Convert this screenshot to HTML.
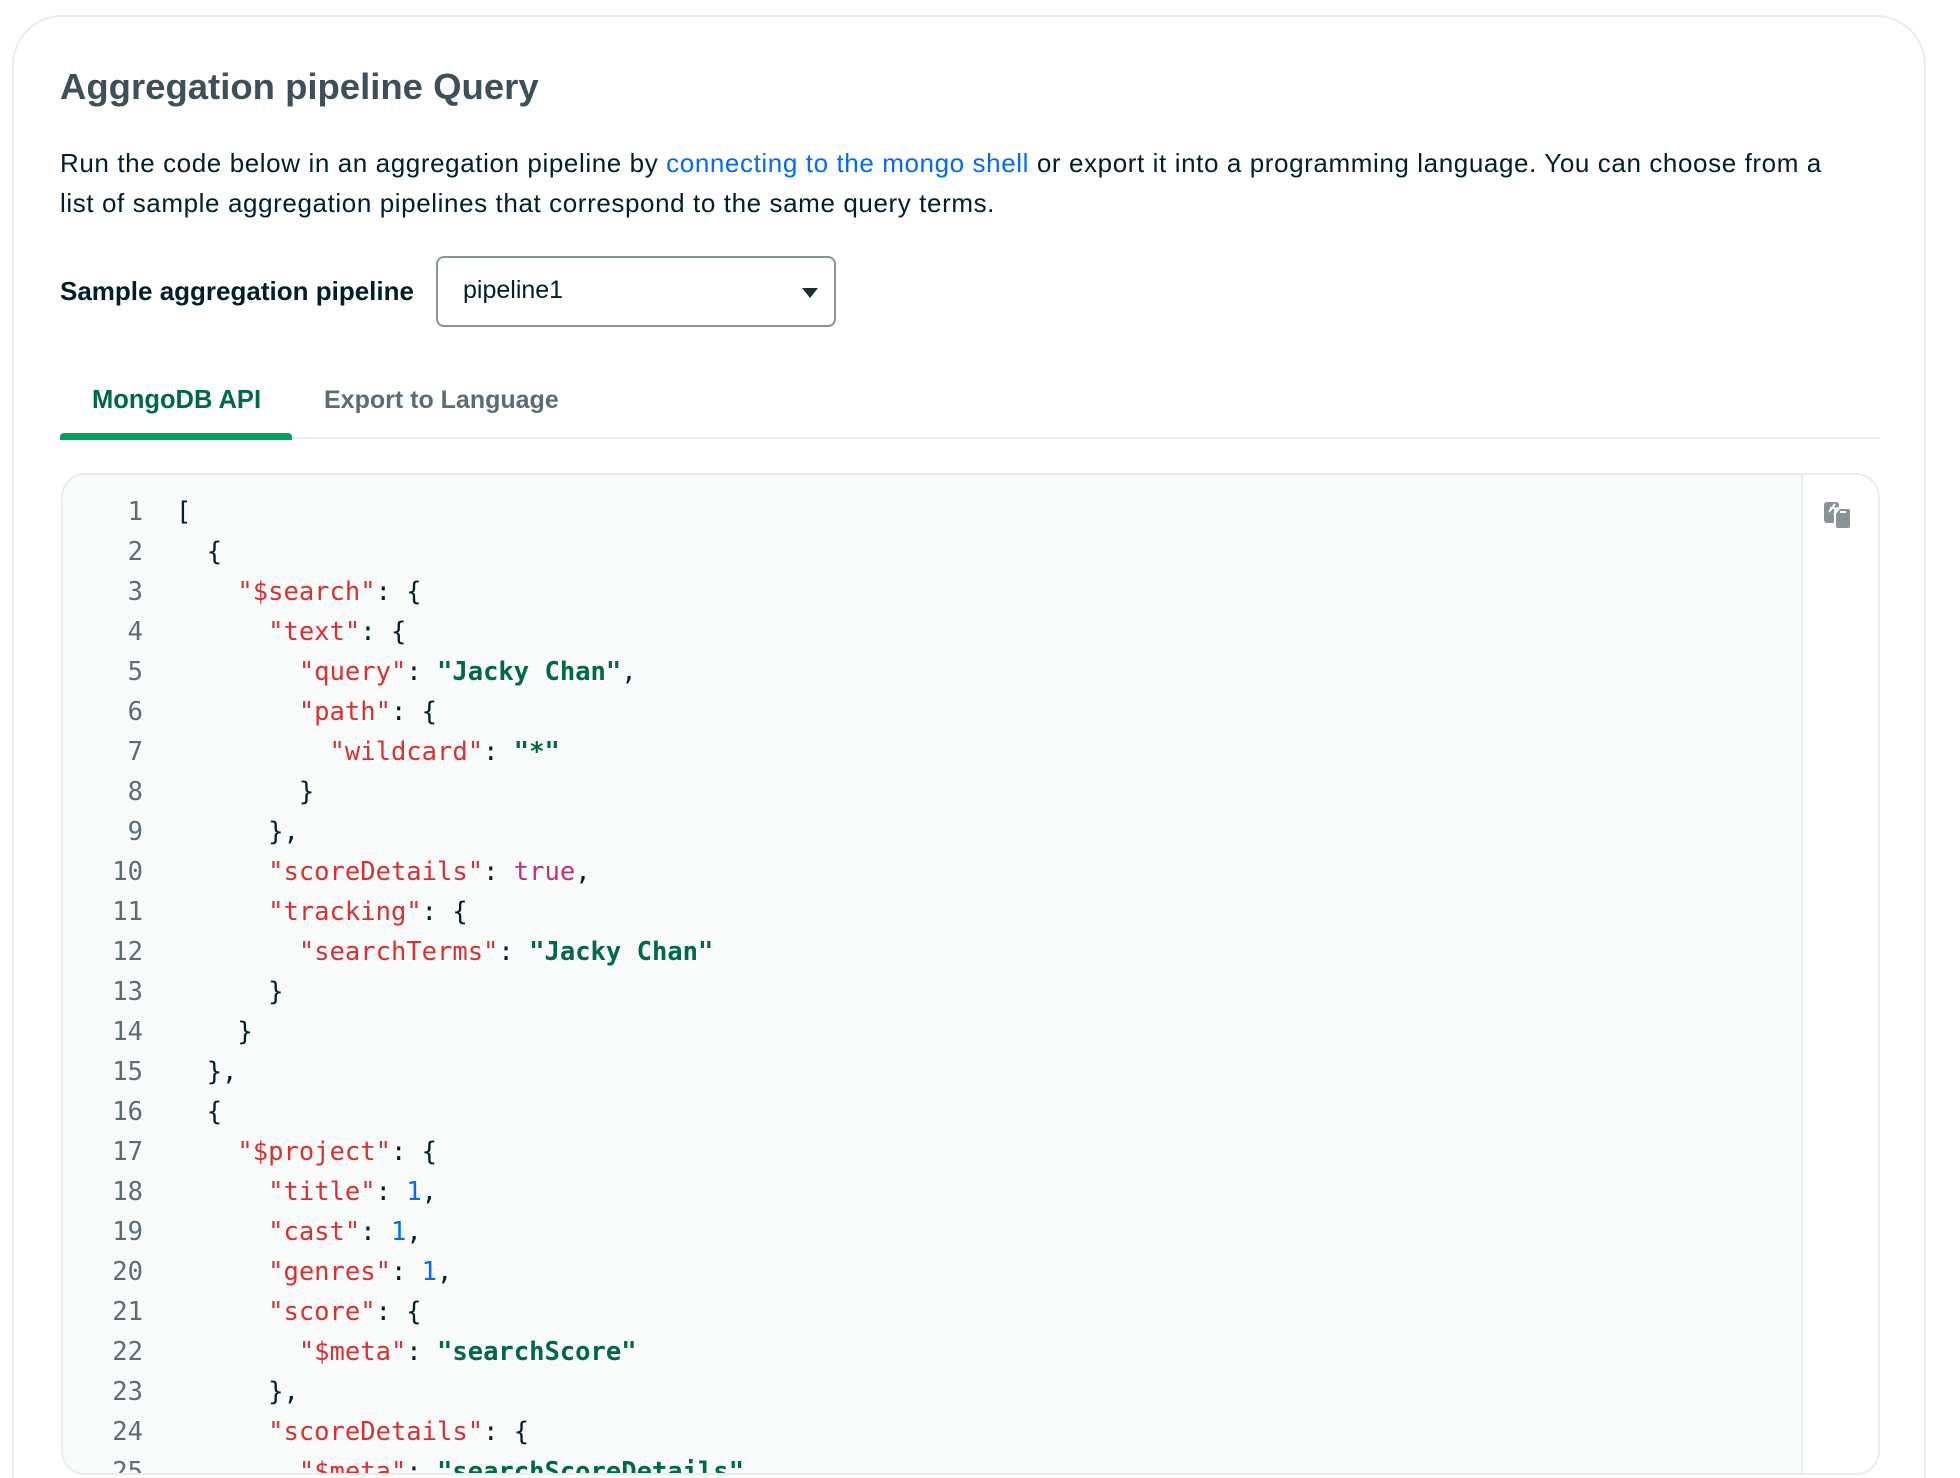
<!DOCTYPE html>
<html><head><meta charset="utf-8"><style>
html,body{margin:0;padding:0;background:#fff;width:1960px;height:1478px;overflow:hidden;font-family:"Liberation Sans",sans-serif;}
.wrap{position:relative;width:1960px;height:1478px;overflow:hidden}
.card{position:absolute;left:12px;top:15px;width:1914px;height:1530px;border:2px solid #e8eded;border-radius:50px;box-sizing:border-box;background:#fff;}
h1{position:absolute;left:60px;top:66px;margin:0;font-size:36.5px;font-weight:700;color:#3d4f58;}
.p{position:absolute;left:60px;top:143px;white-space:nowrap;font-size:26px;letter-spacing:0.6px;line-height:40px;color:#001e2b;}
.p a{color:#016bf8;text-decoration:none}
.lbl{position:absolute;left:60px;top:276px;font-size:26px;font-weight:700;color:#001e2b;}
.sel{position:absolute;left:436px;top:256px;width:400px;height:71px;border:2px solid #889397;border-radius:8px;box-sizing:border-box;font-size:25px;color:#001e2b;padding:18px 0 0 25px;}
.sel:after{content:"";position:absolute;right:16px;top:30px;border-left:8px solid transparent;border-right:8px solid transparent;border-top:10px solid #1c2d38;}
.tab{position:absolute;top:386px;font-size:25.5px;font-weight:700}
.line{position:absolute;left:60px;top:437px;width:1820px;height:2px;background:#e8eded}
.ul{position:absolute;left:60px;top:433px;width:232px;height:7px;background:#00a35c;border-radius:4px 4px 0 0}
.code{position:absolute;left:61px;top:473px;width:1819px;height:1002px;border:2px solid #e8eded;border-radius:24px;box-sizing:border-box;background:#f9fbfa;overflow:hidden}
.side{position:absolute;right:0;top:0;width:75px;height:100%;background:#fff;border-left:2px solid #e8eded}
pre{margin:0;position:absolute;left:0;top:17px;font-family:"DejaVu Sans Mono","Liberation Mono",monospace;font-size:25.5px;line-height:40px;color:#001e2b}
.n{display:inline-block;width:80px;text-align:right;color:#5c6c75;margin-right:33px}
.k{color:#db3030}.s{color:#00684a;font-weight:bold}.b{color:#c0317a}.d{color:#016bf8}
</style></head><body><div class="wrap">
<div class="card"></div>
<h1>Aggregation pipeline Query</h1>
<div class="p">Run the code below in an aggregation pipeline by <a>connecting to the mongo shell</a> or export it into a programming language. You can choose from a<br>list of sample aggregation pipelines that correspond to the same query terms.</div>
<div class="lbl">Sample aggregation pipeline</div>
<div class="sel">pipeline1</div>
<div class="tab" style="left:92px;color:#00684a">MongoDB API</div>
<div class="tab" style="left:324px;color:#5c6c75;font-weight:600;font-size:25px">Export to Language</div>
<div class="line"></div><div class="ul"></div>
<div class="code">
<pre><span class="n">1</span>[
<span class="n">2</span>  {
<span class="n">3</span>    <span class="k">"$search"</span>: {
<span class="n">4</span>      <span class="k">"text"</span>: {
<span class="n">5</span>        <span class="k">"query"</span>: <span class="s">"Jacky Chan"</span>,
<span class="n">6</span>        <span class="k">"path"</span>: {
<span class="n">7</span>          <span class="k">"wildcard"</span>: <span class="s">"*"</span>
<span class="n">8</span>        }
<span class="n">9</span>      },
<span class="n">10</span>      <span class="k">"scoreDetails"</span>: <span class="b">true</span>,
<span class="n">11</span>      <span class="k">"tracking"</span>: {
<span class="n">12</span>        <span class="k">"searchTerms"</span>: <span class="s">"Jacky Chan"</span>
<span class="n">13</span>      }
<span class="n">14</span>    }
<span class="n">15</span>  },
<span class="n">16</span>  {
<span class="n">17</span>    <span class="k">"$project"</span>: {
<span class="n">18</span>      <span class="k">"title"</span>: <span class="d">1</span>,
<span class="n">19</span>      <span class="k">"cast"</span>: <span class="d">1</span>,
<span class="n">20</span>      <span class="k">"genres"</span>: <span class="d">1</span>,
<span class="n">21</span>      <span class="k">"score"</span>: {
<span class="n">22</span>        <span class="k">"$meta"</span>: <span class="s">"searchScore"</span>
<span class="n">23</span>      },
<span class="n">24</span>      <span class="k">"scoreDetails"</span>: {
<span class="n">25</span>        <span class="k">"$meta"</span>: <span class="s">"searchScoreDetails"</span>
</pre>
<div class="side"><svg style="position:absolute;left:20px;top:26px" width="30" height="30" viewBox="0 0 30 30">
<rect x="1" y="1" width="15" height="21" rx="3" fill="#889397"/>
<rect x="12" y="7" width="16" height="21" rx="3" fill="#889397" stroke="#fff" stroke-width="2"/>
<path d="M6 11L12 3M11 14L17 6" stroke="#fff" stroke-width="2" fill="none"/>
<path d="M7 7h5M17 11h6" stroke="#fff" stroke-width="2" fill="none"/>
</svg></div>
</div>
</div></body></html>
